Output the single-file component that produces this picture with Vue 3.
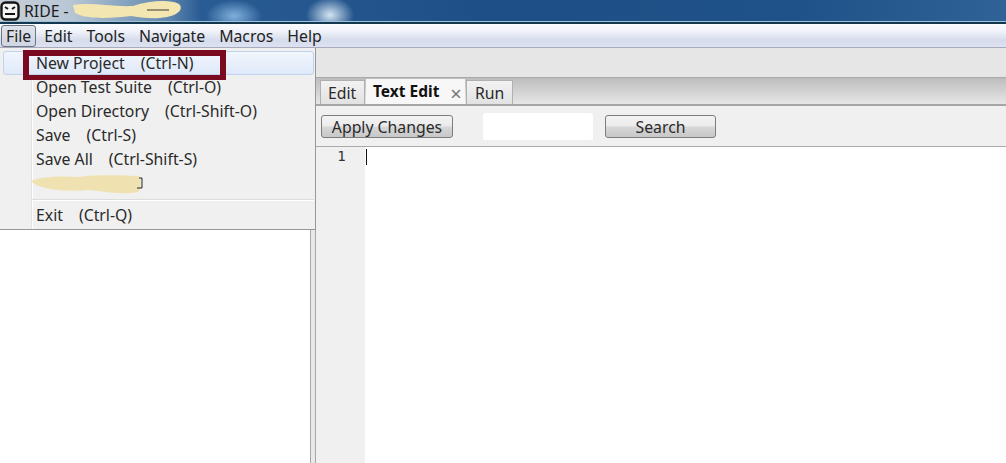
<script setup>
const menus = ['File', 'Edit', 'Tools', 'Navigate', 'Macros', 'Help']
const items = [
  { t: 'New Project', k: '(Ctrl-N)', on: true },
  { t: 'Open Test Suite', k: '(Ctrl-O)' },
  { t: 'Open Directory', k: '(Ctrl-Shift-O)' },
  { t: 'Save', k: '(Ctrl-S)' },
  { t: 'Save All', k: '(Ctrl-Shift-S)' },
]
</script>

<template>
  <div class="win">
    <header class="title">
      <svg class="logo" width="20" height="20" viewBox="0 0 20 20">
        <rect x="1.5" y="1.5" width="17" height="17" rx="4" fill="#f4f4f4" stroke="#151515" stroke-width="2.4" />
        <path d="M5 6 8 8M15 6 12 8M5 13h10" fill="none" stroke="#151515" stroke-width="2" />
      </svg>
      <span class="ttext">RIDE -</span>
      <svg class="scrib" width="112" height="20" viewBox="0 0 112 20">
        <path d="M2 5C20 2 40 7 62 6 78 1 98-1 108 4c5 5-1 11-12 13-16 3-26 0-36-1-18 2-44 4-56-3z" fill="#f3e6b0" />
        <path d="M76 10h22" stroke="#6b6b58" stroke-width="1.4" />
      </svg>
    </header>

    <nav class="menubar">
      <span v-for="(m, i) in menus" :key="m" class="mitem" :class="{ open: i === 0 }">{{ m }}</span>
    </nav>

    <div class="body">
      <aside class="tree"></aside>
      <div class="split"></div>
      <main class="main">
        <div class="toolbar"></div>
        <div class="tabstrip">
          <span class="tab t-edit">Edit</span>
          <span class="tab active"><b>Text Edit</b><i class="close">×</i></span>
          <span class="tab t-run">Run</span>
        </div>
        <div class="actions">
          <button class="btn apply">Apply Changes</button>
          <div class="search"></div>
          <button class="btn find">Search</button>
        </div>
        <div class="editor">
          <div class="gutter">1</div>
          <div class="code"><span class="caret"></span></div>
        </div>
      </main>
    </div>

    <div class="menu">
      <div class="rail"></div>
      <div class="list">
        <div v-for="it in items" :key="it.t" class="row" :class="{ on: it.on }">
          <span class="rowt">{{ it.t }}</span><span class="rowk">{{ it.k }}</span>
        </div>
        <div class="row">
          <svg class="scrib2" width="114" height="26" viewBox="0 0 114 26">
            <path d="M0 10C12 5 30 5 48 6 70 3 92 5 108 5c3 5 2 13-1 16-14 3-30 0-50-2C36 21 8 19 0 10z" fill="#efe2b0" />
            <path d="M108 7h3v10h-5" fill="none" stroke="#222" stroke-width="1" />
          </svg>
        </div>
        <div class="sep"></div>
        <div class="row"><span class="rowt">Exit</span><span class="rowk">(Ctrl-Q)</span></div>
      </div>
    </div>
    <div class="mark"></div>
  </div>
</template>

<style scoped>
.win {
  width: 1006px;
  height: 463px;
  overflow: hidden;
  position: relative;
  display: flex;
  flex-direction: column;
  background: #fff;
  font-family: "Noto Sans", sans-serif;
  font-size: 15.8px;
  color: #2a2a2a;
}
.title {
  height: 22px;
  flex: none;
  display: flex;
  align-items: center;
  gap: 4px;
  background:
    radial-gradient(ellipse 28px 16px at 234px 16px, #7fb0dc 0, rgba(127, 176, 220, 0) 100%),
    radial-gradient(ellipse 24px 18px at 330px 15px, #d3e4f3 0, rgba(211, 228, 243, 0) 100%),
    linear-gradient(90deg, #c6d0da 0, #b9c6d4 70px, #5e86ae 170px, #2a5c94 200px, #1e4f86 480px, #1f5288 800px, #2f6397 1006px);
  border-bottom: 2px solid #12384f;
  box-shadow: inset 0 -1px 0 #9fc0d8;
  box-sizing: content-box;
}
.logo { flex: none; }
.ttext { color: #1c1c1c; }
.scrib { margin-left: -2px; margin-top: -3px; }
.menubar {
  height: 24px;
  flex: none;
  display: flex;
  align-items: center;
  gap: 2px;
  padding-left: 1px;
  box-sizing: border-box;
  background: linear-gradient(#fbfcfe, #f0f3f9 30%, #d6dcec 70%, #dde2f2);
  border-bottom: 1px solid #a9abbd;
}
.mitem {
  padding: 0 6px;
  height: 22px;
  line-height: 23px;
  box-sizing: border-box;
  color: #222;
}
.mitem.open {
  background: linear-gradient(#dfe3ea, #cfd6e2);
  border: 1px solid #6b7484;
  border-radius: 3px;
  padding: 0 4px;
  line-height: 21px;
}
.body { flex: 1; display: flex; min-height: 0; }
.tree { width: 310px; flex: none; background: #fff; }
.split {
  width: 6px;
  flex: none;
  box-sizing: border-box;
  background: #e8e8e8;
  border-left: 1px solid #a8a8a8;
  border-right: 1px solid #a8a8a8;
}
.main { flex: 1; display: flex; flex-direction: column; min-width: 0; }
.toolbar {
  height: 30px;
  flex: none;
  box-sizing: border-box;
  background: #e6e6e6;
  border-bottom: 1px solid #aaa;
}
.tabstrip {
  height: 28px;
  flex: none;
  display: flex;
  align-items: flex-end;
  gap: 1px;
  padding-left: 4px;
  box-sizing: border-box;
  background: linear-gradient(#bdbdbd, #e6e6e6);
  border-bottom: 2px solid #a6a6a6;
}
.tab {
  height: 24px;
  box-sizing: border-box;
  display: flex;
  align-items: center;
  background: linear-gradient(#f2f2f2, #e2e2e2);
  border: 1px solid #b0b0b0;
  border-bottom: 0;
}
.t-edit { width: 45px; padding-left: 7px; }
.t-run { width: 47px; padding-left: 8px; }
.tab.active {
  width: 99px;
  height: 25px;
  background: #f7f7f7;
  border: 0;
  padding: 0 0 1px 7px;
  color: #111;
}
.tab.active b { font-size: 15.5px; font-weight: 700; }
.close {
  font-style: normal;
  color: #777;
  margin-left: 11px;
  font-size: 20px;
  line-height: 1;
  padding-top: 5px;
}
.actions {
  height: 41px;
  flex: none;
  display: flex;
  align-items: center;
  padding-left: 5px;
  background: #f0f0f0;
  border-bottom: 1px solid #aaa;
  box-sizing: border-box;
}
.btn {
  font: inherit;
  color: #2a2a2a;
  height: 23px;
  padding: 0;
  border: 1px solid #7d7d7d;
  border-radius: 3px;
  background: linear-gradient(#f3f3f3 0, #ececec 45%, #d6d6d6 55%, #c8c8c8);
}
.apply { width: 132px; }
.search {
  width: 110px;
  height: 27px;
  margin: 1px 0 0 30px;
  background: #fff;
  border-radius: 2px;
}
.find { width: 111px; margin-left: 12px; }
.editor { flex: 1; display: flex; min-height: 0; }
.gutter {
  width: 49px;
  flex: none;
  box-sizing: border-box;
  background: #f0f0f0;
  text-align: center;
  padding: 1px 0 0 2px;
  font-family: "DejaVu Sans Mono", monospace;
  font-size: 14px;
  color: #333;
}
.code { flex: 1; background: #fff; padding-top: 2px; }
.caret { display: block; width: 1px; height: 16px; margin-left: 1px; background: #111; }
.menu {
  position: absolute;
  left: 0;
  top: 48px;
  width: 316px;
  height: 182px;
  box-sizing: border-box;
  background: #f0f0f0;
  border-right: 1px solid #979797;
  border-bottom: 1px solid #979797;
  display: flex;
  padding: 3px 0 0 2px;
}
.rail { width: 29px; flex: none; border-right: 1px solid #e2e3e3; box-shadow: 1px 0 0 #fff; }
.list { flex: 1; margin-left: -29px; display: flex; flex-direction: column; min-width: 0; }
.row {
  height: 24px;
  flex: none;
  display: flex;
  align-items: center;
  padding-left: 33px;
  box-sizing: border-box;
  white-space: pre;
  color: #2a2a2a;
  position: relative;
}
.row.on {
  background: linear-gradient(#f2f6fd, #dfe9f9);
  border: 1px solid #c0d3ec;
  border-radius: 3px;
  padding-left: 32px;
  margin-right: 1px;
}
.rowk { margin-left: 16px; }
.scrib2 { position: absolute; left: 28px; top: 0; }
.sep { height: 1px; margin: 4px 1px 3px 29px; background: #dcdcdc; box-shadow: 0 1px 0 #fff; flex: none; }
.mark {
  position: absolute;
  left: 23px;
  top: 50px;
  width: 203px;
  height: 30px;
  box-sizing: border-box;
  border: 6px solid #7a0a20;
  border-bottom-width: 5px;
}
</style>
